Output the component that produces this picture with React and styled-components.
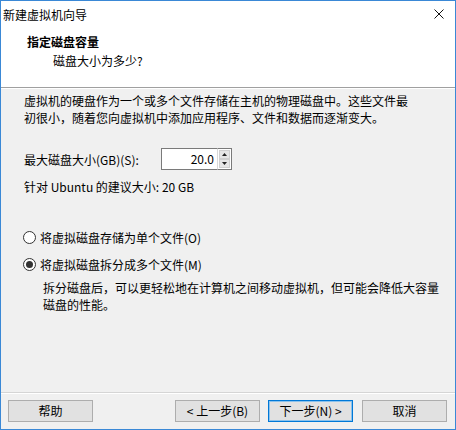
import React from "react";
import styled, { createGlobalStyle } from "styled-components";

const GlobalStyle = createGlobalStyle`
  html, body { margin: 0; padding: 0; background: #ffffff; }
  * { box-sizing: border-box; }
  body {
    font-family: "Noto Sans CJK SC", "Noto Sans", "Liberation Sans", sans-serif;
    font-size: 12px;
    color: #000;
  }
`;

const Window = styled.div`
  width: 456px;
  height: 430px;
  border: 1px solid #3a88d6;
  display: flex;
  flex-direction: column;
  background: #f0f0f0;
  overflow: hidden;
`;

const TitleBar = styled.div`
  height: 27px;
  background: #fff;
  display: flex;
  align-items: center;
  justify-content: space-between;
  padding: 0 11px 0 2px;
  line-height: 17px;
`;

const TitleText = styled.span`
  font-size: 12px;
  color: #000;
`;

const CloseButton = styled.span`
  display: flex;
  width: 10px;
  height: 10px;
  margin-top: -1px;
`;

const Header = styled.div`
  height: 60px;
  background: #fff;
  border-bottom: 1px solid #a0a0a0;
  padding: 5px 0 0 26px;
  display: flex;
  flex-direction: column;
  gap: 2px;
  line-height: 17px;
`;

const HeaderTitle = styled.div`
  font-weight: 700;
  font-size: 12px;
`;

const HeaderSub = styled.div`
  padding-left: 26px;
`;

const Body = styled.div`
  flex: 1;
  padding: 3px 0 0 23px;
  display: flex;
  flex-direction: column;
  line-height: 17px;
  border-top: 1px solid #fff;
`;

const Paragraph = styled.p`
  margin: 0;
  width: ${(p) => p.$width || 390}px;
  margin-left: ${(p) => p.$indent || 0}px;
  margin-top: ${(p) => p.$top || 0}px;
`;

const SizeRow = styled.div`
  display: flex;
  align-items: center;
  height: 22px;
  margin-top: 22px;
`;

const FieldLabel = styled.span`
  width: 137px;
`;

const Spin = styled.div`
  display: flex;
  height: 22px;
`;

const SpinInput = styled.div`
  width: 56px;
  height: 22px;
  background: #fff;
  border: 1px solid #7a7a7a;
  border-right: none;
  text-align: right;
  padding-right: 3px;
  line-height: 20px;
`;

const SpinButtons = styled.div`
  width: 15px;
  height: 22px;
  display: flex;
  flex-direction: column;
  border: 1px solid #7a7a7a;
  border-left: 1px solid #d9d9d9;
  background: #fff;
  padding: 1px;
  gap: 0;
`;

const SpinArrow = styled.div`
  flex: 1;
  background: #e6e6e6;
  border: 1px solid #d0d0d0;
  display: flex;
  align-items: center;
  justify-content: center;
`;

const RadioRow = styled.label`
  display: flex;
  align-items: center;
  gap: 4px;
  height: 17px;
  margin-top: ${(p) => p.$top}px;
  margin-left: -1px;
`;

const RadioCircle = styled.span`
  width: 13px;
  height: 13px;
  border-radius: 50%;
  border: 1px solid #333;
  background: #fff;
  display: flex;
  align-items: center;
  justify-content: center;
  flex-shrink: 0;

  &::after {
    content: "";
    width: 7px;
    height: 7px;
    border-radius: 50%;
    background: ${(p) => (p.$checked ? "#333" : "transparent")};
  }
`;

const Footer = styled.div`
  height: 37px;
  border-top: 1px solid #d5d5d5;
  box-shadow: inset 0 1px 0 #ffffff;
  display: flex;
  align-items: flex-start;
  padding: 7px 8px 0 7px;
`;

const NavGroup = styled.div`
  margin-left: auto;
  display: flex;
  gap: 8px;
`;

const Button = styled.button`
  width: 85px;
  height: 22px;
  background: #e1e1e1;
  border: 1px solid ${(p) => (p.$default ? "#0078d7" : "#adadad")};
  box-shadow: ${(p) => (p.$default ? "inset 0 0 0 1px #8cc2ec" : "none")};
  font-family: inherit;
  font-size: 12px;
  color: #000;
  padding: 0;
  line-height: 18px;
  margin-left: ${(p) => p.$gap || 0}px;
`;

const UpArrow = () => (
  <svg width="5" height="3" viewBox="0 0 5 3">
    <polygon points="2.5,0 5,3 0,3" fill="#222" />
  </svg>
);

const DownArrow = () => (
  <svg width="5" height="3" viewBox="0 0 5 3">
    <polygon points="0,0 5,0 2.5,3" fill="#222" />
  </svg>
);

export default function App() {
  return (
    <>
      <GlobalStyle />
      <Window>
        <TitleBar>
          <TitleText>新建虚拟机向导</TitleText>
          <CloseButton>
            <svg width="10" height="10" viewBox="0 0 10 10">
              <path d="M0.5 0.5 L9.5 9.5 M9.5 0.5 L0.5 9.5" stroke="#111" strokeWidth="1" fill="none" />
            </svg>
          </CloseButton>
        </TitleBar>
        <Header>
          <HeaderTitle>指定磁盘容量</HeaderTitle>
          <HeaderSub>磁盘大小为多少?</HeaderSub>
        </Header>
        <Body>
          <Paragraph>
            虚拟机的硬盘作为一个或多个文件存储在主机的物理磁盘中。这些文件最初很小，随着您向虚拟机中添加应用程序、文件和数据而逐渐变大。
          </Paragraph>
          <SizeRow>
            <FieldLabel>最大磁盘大小(GB)(S):</FieldLabel>
            <Spin>
              <SpinInput>20.0</SpinInput>
              <SpinButtons>
                <SpinArrow>
                  <UpArrow />
                </SpinArrow>
                <SpinArrow>
                  <DownArrow />
                </SpinArrow>
              </SpinButtons>
            </Spin>
          </SizeRow>
          <Paragraph $top={8}>针对 Ubuntu 的建议大小: 20 GB</Paragraph>
          <RadioRow $top={34}>
            <RadioCircle />
            <span>将虚拟磁盘存储为单个文件(O)</span>
          </RadioRow>
          <RadioRow $top={10}>
            <RadioCircle $checked />
            <span>将虚拟磁盘拆分成多个文件(M)</span>
          </RadioRow>
          <Paragraph $top={6} $indent={19} $width={400}>
            拆分磁盘后，可以更轻松地在计算机之间移动虚拟机，但可能会降低大容量磁盘的性能。
          </Paragraph>
        </Body>
        <Footer>
          <Button>帮助</Button>
          <NavGroup>
            <Button>&lt; 上一步(B)</Button>
            <Button $default>下一步(N) &gt;</Button>
            <Button $gap={1}>取消</Button>
          </NavGroup>
        </Footer>
      </Window>
    </>
  );
}
